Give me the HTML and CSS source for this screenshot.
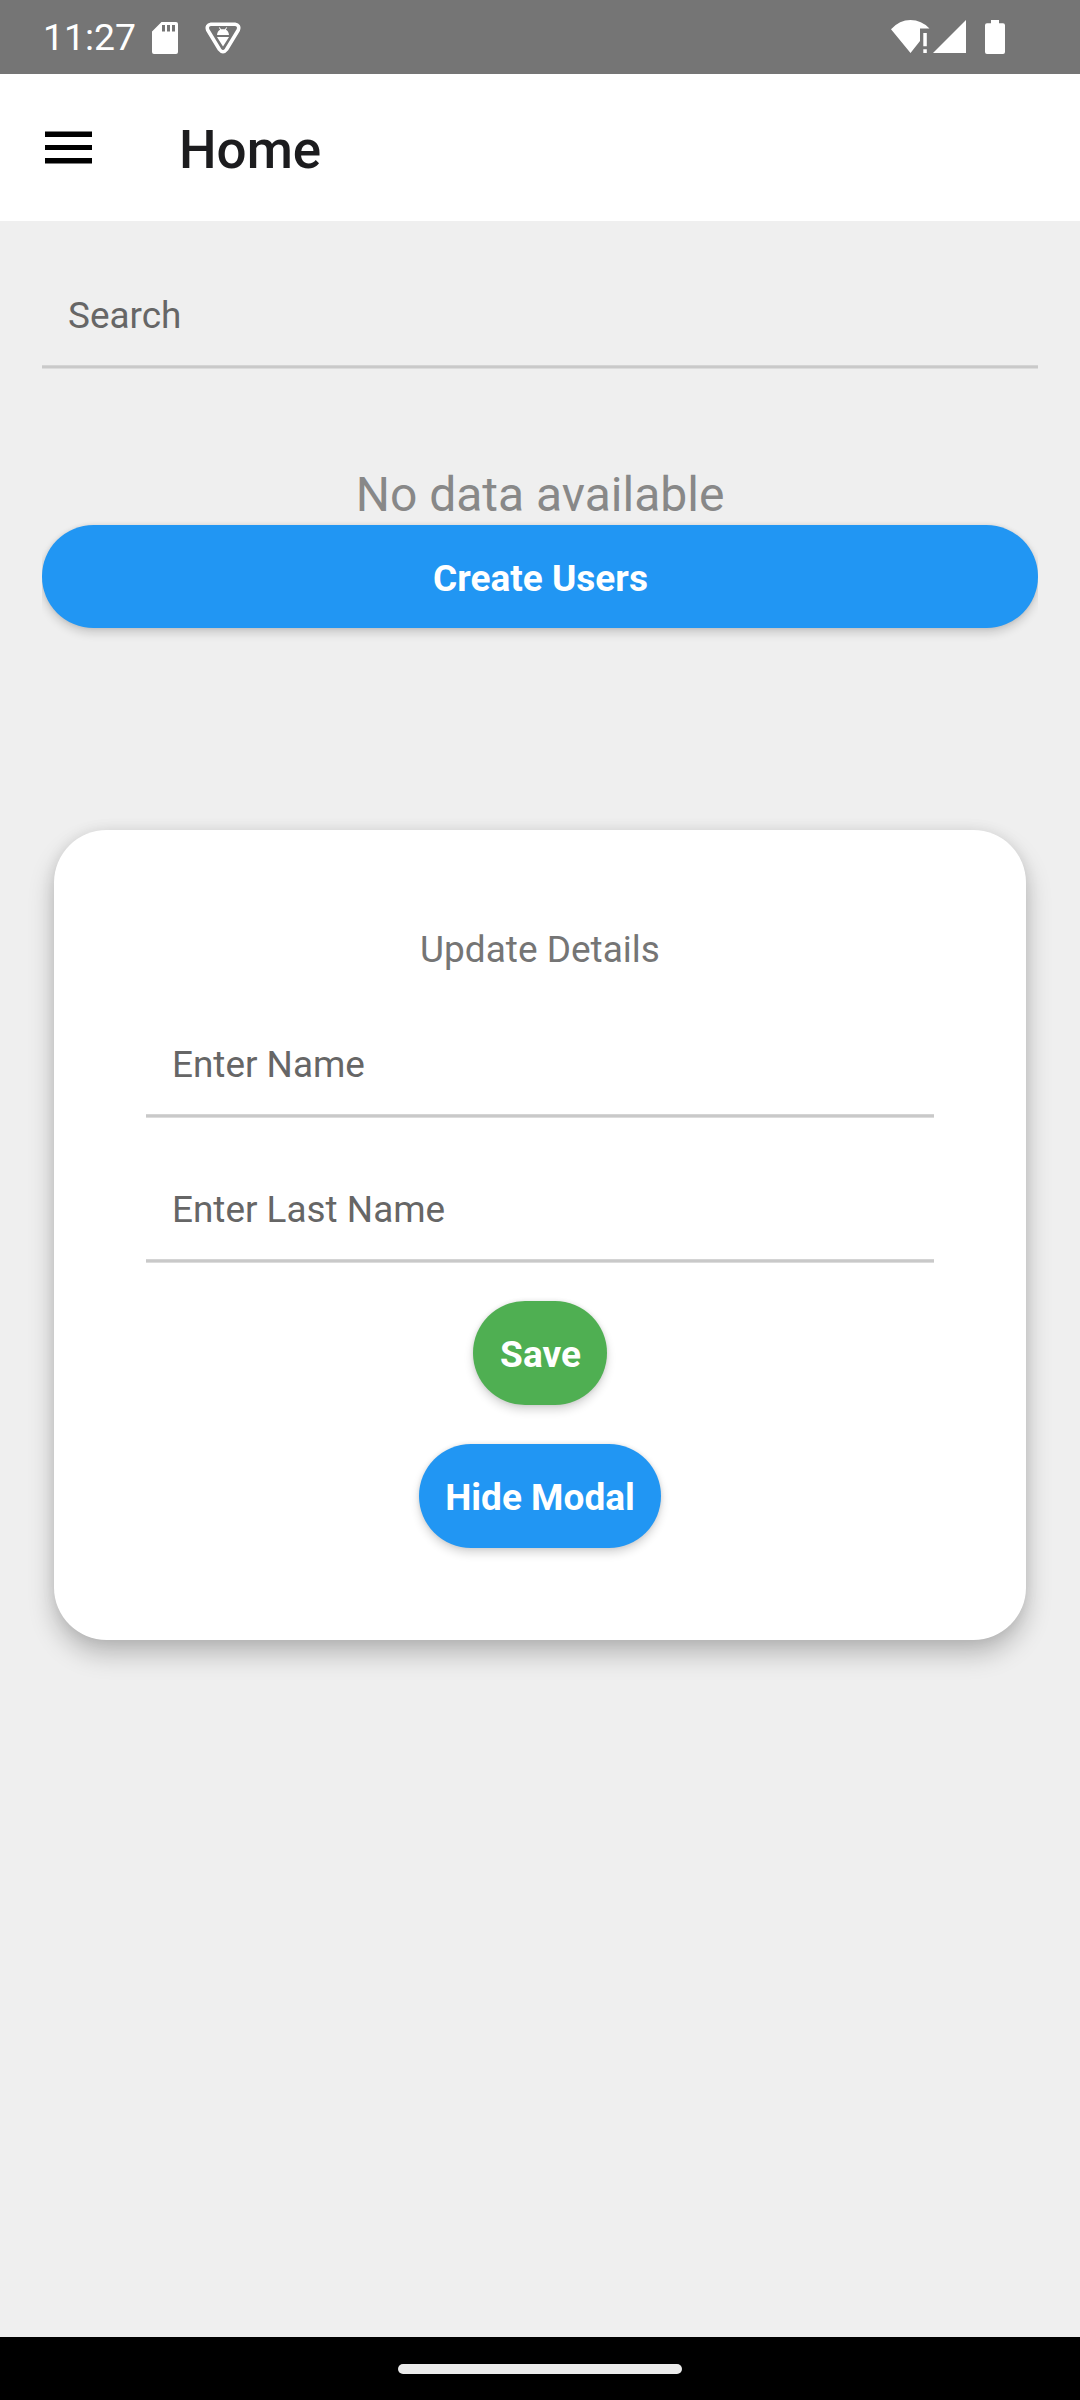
FILE: index.html
```html
<!DOCTYPE html>
<html lang="en">
<head>
<meta charset="utf-8">
<title>Home</title>
<link rel="stylesheet" href="styles.css">
</head>
<body>
<div class="screen">
  <div class="status">
    <span class="clock">11:27</span>
    <svg class="sd" width="26" height="32" viewBox="0 0 26 32"><path fill="#fff" fill-rule="evenodd" d="M9.5 0H24a2 2 0 0 1 2 2v28a2 2 0 0 1-2 2H2a2 2 0 0 1-2-2V9.500ZM10 3v6.500h3V3Zm5 0v6.500h3V3Zm5 0v6.500h3V3Z"/></svg>
    <svg class="shield" width="36" height="34" viewBox="0 0 36 34"><path fill="none" stroke="#fff" stroke-width="3.600" stroke-linejoin="round" d="M6 3.200H30Q35 4 33.300 9L21.500 28.500Q18 33 14.500 28.500L2.700 9Q1 4 6 3.200Z"/><path fill="#fff" d="M12 14Q12.300 10 15.200 8.800L13.800 6.500 14.500 6.200 16.100 8.300H19.900L21.500 6.200 22.200 6.500 20.800 8.800Q23.700 10 24 14ZM12 16H24L18 25.500Z"/></svg>
    <svg class="wifi" width="39" height="34" viewBox="0 0 39 34"><path fill="#fff" d="M0 9.200Q8.500 0 19.500 0T38.500 8.500H29V21L19.500 33ZM32.300 13h3.500v13.300h-3.500ZM32.300 29.300h3.500V33h-3.500Z"/></svg>
    <svg class="signal" width="33" height="33" viewBox="0 0 33 33"><path fill="#fff" d="M33 0V33H0Z"/></svg>
    <svg class="battery" width="20" height="34" viewBox="0 0 20 34"><path fill="#fff" d="M6 0h8v3.300h4a2 2 0 0 1 2 2V32a2 2 0 0 1-2 2H2a2 2 0 0 1-2-2V5.300a2 2 0 0 1 2-2h4Z"/></svg>
  </div>
  <header class="appbar">
    <svg class="menu" width="47" height="33" viewBox="0 0 47 33"><path d="M0 .5H47V6H0ZM0 14H47V19H0ZM0 27H47V32.500H0Z"/></svg>
    <h1 class="title">Home</h1>
  </header>
  <main class="content">
    <div class="field">Search</div>
    <p class="empty">No data available</p>
    <div class="clip"><div class="btn wide">Create Users</div></div>
    <section class="card">
      <p class="caption">Update Details</p>
      <div class="field">Enter Name</div>
      <div class="field">Enter Last Name</div>
      <div class="btn save">Save</div>
      <div class="btn hide">Hide Modal</div>
    </section>
  </main>
  <footer class="nav"><div class="pill"></div></footer>
</div>
</body>
</html>
```
FILE: styles.css
```css
* { box-sizing: border-box; }
body { margin: 0; background: #efefef; font-family: Roboto, sans-serif; }
.screen { width: 1080px; height: 2400px; display: flex; flex-direction: column; }
.status { height: 74px; flex: none; background: #757575; color: #fff; display: flex; align-items: flex-start; padding-left: 43px; }
.status svg { flex: none; }
.clock { width: 109px; font-size: 37.3px; line-height: 75px; }
.sd { margin-top: 22px; }
.shield { margin: 21px 0 0 27px; }
.wifi { margin: 20px 0 0 650px; }
.signal { margin: 20px 0 0 3px; }
.battery { margin: 20px 0 0 19px; }
.appbar { height: 147px; flex: none; background: #fff; display: flex; align-items: center; padding-left: 45px; }
.menu { fill: #000; }
.title { margin: 5px 0 0 87px; font-size: 53px; font-weight: 500; line-height: 62px; color: #1c1c1e; }
.content { flex: 1; padding: 42px 42px 0; }
.field { height: 105px; border-bottom: 2px solid #c9c9c9; box-shadow: 0 1px 0 #dcdcdc, inset 0 -1px 0 #d4d4d4; padding-left: 26px; font-size: 36.9px; line-height: 106px; color: #666; }
.empty { margin: 95px 0 0; height: 62px; line-height: 64px; font-size: 48px; text-align: center; color: #888; }
.clip { height: 146px; margin-top: -6px; padding-top: 6px; overflow: hidden; }
.btn { height: 104px; border-radius: 52px; background: #2196f3; color: #fff; font-size: 37px; font-weight: 700; line-height: 107px; text-align: center; box-shadow: 0 5px 10px rgba(0,0,0,.16), 0 0 4px rgba(0,0,0,.1); }
.wide { height: 103px; padding-left: 1px; }
.card { margin: 165px 12px 0; height: 810px; padding: 92px 92px 0; border-radius: 52.5px; background: #fff; display: flex; flex-direction: column; box-shadow: 0 14px 26px rgba(0,0,0,.23), 0 0 14px rgba(0,0,0,.08); }
.caption { margin: 0 0 35px; height: 55px; line-height: 55px; text-align: center; font-size: 37px; color: #757575; }
.card .field + .field { margin-top: 40px; }
.save { width: 134px; margin: 39px auto 0; padding-left: 1px; background: #4faf52; }
.hide { width: 242px; margin: 39px auto 0; }
.nav { height: 63px; flex: none; background: #000; display: flex; align-items: center; justify-content: center; }
.pill { width: 284px; height: 10px; border-radius: 5px; background: #ebebeb; }
```
